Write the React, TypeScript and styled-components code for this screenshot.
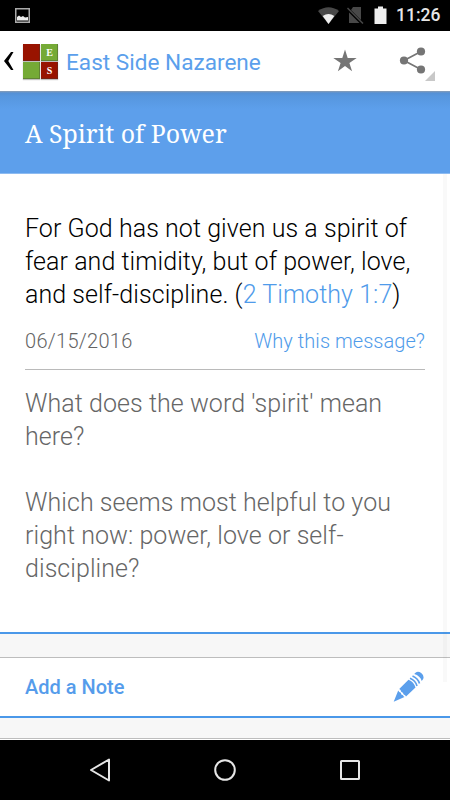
import React from 'react';
import styled, { createGlobalStyle } from 'styled-components';

const GlobalStyle = createGlobalStyle`
  * { box-sizing: border-box; }
  body { margin: 0; background: #000; }
  p, h1, h2 { margin: 0; font-weight: inherit; }
  svg { display: block; flex: none; }
`;

const Screen = styled.div`
  position: relative;
  display: flex;
  flex-direction: column;
  width: 450px;
  height: 800px;
  overflow: hidden;
  background: #f7f7f7;
  font-family: Roboto, sans-serif;
`;

const StatusBar = styled.header`
  display: flex;
  align-items: center;
  height: 31px;
  padding: 0 10px 0 15px;
  background: #000;
  color: #e6e6e6;
  flex: none;
`;

const StatusIcons = styled.div`
  display: flex;
  align-items: center;
  margin-left: auto;
`;

const Clock = styled.span`
  width: 45px;
  margin-left: 8px;
  padding-left: 1px;
  font-size: 17.5px;
  font-weight: 500;
  line-height: 31px;
  white-space: nowrap;
`;

const Toolbar = styled.nav`
  display: flex;
  align-items: center;
  height: 60px;
  background: #fff;
  flex: none;
`;

const BackIcon = styled.svg`
  margin-left: 3px;
`;

const Logo = styled.div`
  display: grid;
  grid-template-columns: 17px 17px;
  grid-template-rows: 17px 17px;
  gap: 1px;
  margin: 1px 0 0 7px;
`;

const LogoTile = styled.span<{ $color: string }>`
  background: ${(p) => p.$color};
  box-shadow: inset -1px -1px 0 rgba(60, 60, 50, 0.35), 0 1px 1px rgba(0, 0, 0, 0.25);
  color: #fff;
  font: bold 10px/18px 'Liberation Serif', serif;
  text-align: center;
`;

const AppTitle = styled.h1`
  margin-left: 8px;
  padding-top: 3px;
  color: #5b9fec;
  font-size: 22.6px;
  line-height: 28px;
  white-space: nowrap;
`;

const Actions = styled.div`
  display: flex;
  margin-left: auto;
`;

const Banner = styled.section`
  height: 83px;
  padding: 25px 25px 0;
  background: linear-gradient(#8a9db3 0, #5590d5 2px, #5696de 5px, #5d9feb 18px, #5d9feb 82px, #8dbbf1 82px);
  color: #fff;
  flex: none;
`;

const BannerTitle = styled.h2`
  font: 24.9px/34px 'Noto Serif', 'Droid Serif', 'DejaVu Serif Condensed', serif;
  white-space: nowrap;
`;

const Card = styled.main`
  height: 460px;
  padding: 38px 25px 0;
  background: #fff;
  border-bottom: 2px solid #4a98e9;
  flex: none;
`;

const Passage = styled.p`
  color: #000;
  font-size: 25px;
  font-weight: 300;
  line-height: 33px;
  letter-spacing: 0.06px;
`;

const Line = styled.span`
  display: block;
  white-space: nowrap;
`;

const Link = styled.a`
  color: #4f9bea;
`;

const Meta = styled.div`
  display: flex;
  justify-content: space-between;
  height: 59px;
  padding-top: 16px;
  border-bottom: 1px solid #bababa;
  color: #646464;
  font-size: 20px;
  font-weight: 300;
  line-height: 28px;
  white-space: nowrap;
`;

const MessageDate = styled.span`
  letter-spacing: 0.3px;
`;

const WhyLink = styled(Link)`
  letter-spacing: 0.05px;
`;

const Question = styled(Passage)`
  margin-bottom: 33px;
  color: #666;
`;

const Questions = styled.div`
  padding-top: 17px;
`;

const NoteRow = styled.section`
  display: flex;
  align-items: center;
  justify-content: space-between;
  height: 61px;
  margin-top: 23px;
  padding: 0 25px;
  background: #fff;
  border-top: 1px solid #bdbdbd;
  border-bottom: 2px solid #4a98e9;
  flex: none;
`;

const NoteLabel = styled.span`
  color: #559ceb;
  font-size: 20px;
  font-weight: 500;
  line-height: 28px;
`;

const NextCard = styled.div`
  height: 2px;
  margin-top: 20px;
  background: #fff;
  border-top: 1px solid #bdbdbd;
  flex: none;
`;

const NavBar = styled.footer`
  display: flex;
  align-items: center;
  justify-content: space-between;
  height: 60px;
  padding: 0 88px;
  background: #000;
  flex: none;
`;

const ScrollThumb = styled.div`
  position: absolute;
  top: 174px;
  right: 3px;
  width: 4px;
  height: 508px;
  background: rgba(120, 120, 120, 0.045);
`;

export default function App() {
  return (
    <>
      <GlobalStyle />
      <Screen>
        <StatusBar>
          <svg width="15" height="15" viewBox="0 0 15 15">
            <path d="M.75.75h13.5v13.5H.75z" fill="none" stroke="#aaa" strokeWidth="1.5" />
            <path d="M2 12.5V9l2-1.5L6 9l2-1 2 1.5 3-.5v3.5z" fill="#eee" />
          </svg>
          <StatusIcons>
            <svg width="69" height="20" viewBox="0 0 69 20">
              <path d="M0 5Q10.500-2.500 21 5L10.500 18z" fill="#484848" />
              <path d="M4.700 10Q10.500 6 16.300 10L10.500 18z" fill="#eee" />
              <path d="M35 1h8v13L33 4zM31 6.500L41.500 17H31z" fill="#484848" />
              <path d="M29.500 2L45 17.500" stroke="#484848" strokeWidth="1.500" />
              <path d="M56.500 2.500h3.500V.5h5v2h3.500V18h-12z" fill="#eee" />
            </svg>
            <Clock>11:26</Clock>
          </StatusIcons>
        </StatusBar>
        <Toolbar>
          <BackIcon width="13" height="22" viewBox="0 0 13 22">
            <path d="M8 2h2.500L5.300 11l5.200 9H8L1 11z" fill="#000" />
          </BackIcon>
          <Logo>
            <LogoTile $color="#981300" />
            <LogoTile $color="#75aa36">E</LogoTile>
            <LogoTile $color="#75aa36" />
            <LogoTile $color="#981300">S</LogoTile>
          </Logo>
          <AppTitle>East Side Nazarene</AppTitle>
          <Actions>
            <svg width="117" height="60" viewBox="333 31 117 60">
              <path d="M345 49.500l2.700 8.400h9l-7.300 5 2.700 8.300-7.100-5.100-7.100 5.100 2.700-8.300-7.300-5h9z" fill="#757575" />
              <path d="M421 51.500L404 60.500l17 9" fill="none" stroke="#757575" strokeWidth="1.700" />
              <circle cx="421" cy="51.500" r="4.100" fill="#757575" />
              <circle cx="404" cy="60.500" r="4.100" fill="#757575" />
              <circle cx="421" cy="69.500" r="4.100" fill="#757575" />
              <path d="M435 71v10h-10z" fill="#c8c8c8" />
            </svg>
          </Actions>
        </Toolbar>
        <Banner>
          <BannerTitle>A Spirit of Power</BannerTitle>
        </Banner>
        <Card>
          <Passage>
            <Line>For God has not given us a spirit of</Line>
            <Line>fear and timidity, but of power, love,</Line>
            <Line>and self-discipline. (<Link>2 Timothy 1:7</Link>)</Line>
          </Passage>
          <Meta>
            <MessageDate>06/15/2016</MessageDate>
            <WhyLink>Why this message?</WhyLink>
          </Meta>
          <Questions>
            <Question>
              <Line>What does the word 'spirit' mean</Line>
              <Line>here?</Line>
            </Question>
            <Question>
              <Line>Which seems most helpful to you</Line>
              <Line>right now: power, love or self-</Line>
              <Line>discipline?</Line>
            </Question>
          </Questions>
        </Card>
        <NoteRow>
          <NoteLabel>Add a Note</NoteLabel>
          <svg width="32" height="32" viewBox="393 671 32 32">
            <g fill="#5b9fec">
              <path d="M393.700 701.700l4.500-11.200q.8 2 2.600 2.200 0 2.200 2.200 2.500.3 1.300 1.500 1.700z" />
              <path d="M399.200 689l9.300-9.300q5.500 2.300 7 7.800l-9.500 9q-.6-1.600-2.300-2-.5-2.200-2.500-2.700-.3-2-2-2.800z" />
              <path d="M415.500 672.800q2.500-2.200 5.700.3 3.300 2.700 2 5.900l-1.500 2q-1.500-5.200-7.500-7z" />
            </g>
            <path d="M410 678.300q5.500 2.200 7 7.700M412.500 676q5.500 2.200 7 7.500" fill="none" stroke="#5b9fec" strokeWidth="1.600" />
          </svg>
        </NoteRow>
        <NextCard />
        <NavBar>
          <svg width="24" height="26" viewBox="0 0 24 26">
            <path d="M21 2.500v21L3 13z" fill="none" stroke="#e6e6e6" strokeWidth="2" strokeLinejoin="round" />
          </svg>
          <svg width="24" height="24" viewBox="0 0 24 24">
            <circle cx="12" cy="12" r="9.800" fill="none" stroke="#e6e6e6" strokeWidth="2" />
          </svg>
          <svg width="24" height="24" viewBox="0 0 24 24">
            <rect x="3" y="3" width="18" height="18" rx=".5" fill="none" stroke="#e6e6e6" strokeWidth="2" />
          </svg>
        </NavBar>
        <ScrollThumb />
      </Screen>
    </>
  );
}
